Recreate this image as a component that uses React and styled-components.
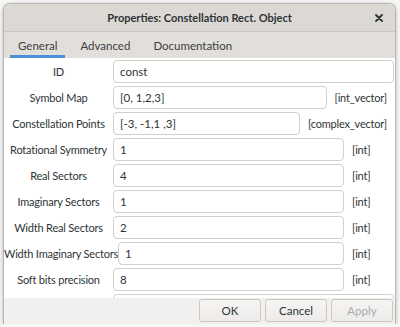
import React from 'react'
import styled, { createGlobalStyle } from 'styled-components'

const GlobalStyle = createGlobalStyle`
  html, body {
    margin: 0;
    padding: 0;
    background: #f7f7f8;
  }
  body {
    font-family: Lato, "Noto Sans", sans-serif;
    font-size: 11px;
    color: #2e3436;
  }
`

const rows = [
  { label: 'ID', value: 'const' },
  { label: 'Symbol Map', value: '[0, 1,2,3]', type: '[int_vector]' },
  { label: 'Constellation Points', value: '[-3, -1,1 ,3]', type: '[complex_vector]' },
  { label: 'Rotational Symmetry', value: '1', type: '[int]' },
  { label: 'Real Sectors', value: '4', type: '[int]' },
  { label: 'Imaginary Sectors', value: '1', type: '[int]' },
  { label: 'Width Real Sectors', value: '2', type: '[int]' },
  { label: 'Width Imaginary Sectors', value: '1', type: '[int]' },
  { label: 'Soft bits precision', value: '8', type: '[int]' },
  { label: '', value: '' },
]

const tabs = ['General', 'Advanced', 'Documentation']

export default function App() {
  return (
    <>
      <GlobalStyle />
      <Dialog>
        <TitleBar>
          <span />
          <Title>Properties: Constellation Rect. Object</Title>
          <Close>
            <svg width="8" height="8" viewBox="0 0 8 8">
              <path d="M1 1 L7 7 M7 1 L1 7" stroke="#2e3436" strokeWidth="1.8" strokeLinecap="round" />
            </svg>
          </Close>
        </TitleBar>
        <TabBar>
          {tabs.map((t, i) => (
            <Tab key={t} active={i === 0}>{t}</Tab>
          ))}
        </TabBar>
        <Content>
          {rows.map((r, i) => (
            <Row key={i}>
              <Label>{r.label}</Label>
              <Field>{r.value}</Field>
              {r.type && <TypeTag>{r.type}</TypeTag>}
            </Row>
          ))}
        </Content>
        <ButtonBar>
          <Button>OK</Button>
          <Button>Cancel</Button>
          <Button disabled>Apply</Button>
        </ButtonBar>
      </Dialog>
    </>
  )
}

const Dialog = styled.div`
  margin: 3px 4px 0 3px;
  width: 391px;
  height: 320px;
  border: 1px solid #b9b5b0;
  border-bottom: none;
  border-radius: 7px 7px 0 0;
  background: #ffffff;
  box-shadow: 0 1px 4px rgba(0, 0, 0, 0.25);
  display: flex;
  flex-direction: column;
  overflow: hidden;
`

const TitleBar = styled.div`
  height: 27px;
  flex: none;
  display: grid;
  grid-template-columns: 30px 1fr 30px;
  align-items: center;
  background: #dcd9d5;
  border-bottom: 1px solid #cbc7c2;
`

const Title = styled.div`
  text-align: center;
  font-weight: 700;
  font-size: 11px;
  color: #2e3436;
`

const Close = styled.div`
  display: flex;
  justify-content: center;
  align-items: center;
  padding-right: 2px;
`

const TabBar = styled.div`
  height: 26px;
  flex: none;
  display: flex;
  gap: 7px;
  padding-left: 6px;
  background: #e2dfdb;
`

const Tab = styled.div`
  padding: 0 8px;
  display: flex;
  align-items: center;
  font-size: 11.5px;
  color: #3a3d3f;
  box-shadow: ${p => (p.active ? 'inset 0 -3px 0 #4a90d9' : 'none')};
`

const Content = styled.div`
  flex: 1;
  min-height: 0;
  overflow: hidden;
  padding: 2px 1px 0 0;
  display: flex;
  flex-direction: column;
  gap: 3px;
`

const Row = styled.div`
  display: flex;
  align-items: center;
  height: 23px;
  flex: none;
`

const Label = styled.div`
  min-width: 109px;
  text-align: center;
  white-space: nowrap;
  font-size: 11px;
  letter-spacing: -0.2px;
  color: #2e3436;
`

const Field = styled.div`
  flex: 1;
  height: 23px;
  box-sizing: border-box;
  border: 1px solid #d3cfca;
  border-radius: 4px;
  padding: 0 6px;
  display: flex;
  align-items: center;
  font-size: 11.5px;
  color: #2e3436;
  background: #ffffff;
`

const TypeTag = styled.div`
  min-width: 50px;
  box-sizing: border-box;
  padding: 0 7px 0 8px;
  white-space: nowrap;
  font-size: 11px;
  letter-spacing: -0.2px;
  color: #2e3436;
`

const ButtonBar = styled.div`
  height: 25px;
  flex: none;
  display: flex;
  justify-content: flex-end;
  align-items: flex-start;
  gap: 4px;
  padding: 1px 2px 0 0;
  background: #f1f0ee;
`

const Button = styled.button`
  min-width: 62px;
  height: 23px;
  padding: 0 10px;
  border: 1px solid #cdc7c2;
  border-radius: 3px;
  background: linear-gradient(#f6f5f4, #edebe9);
  font-family: Lato, "Noto Sans", sans-serif;
  font-size: 11.5px;
  color: ${p => (p.disabled ? '#a9abab' : '#2e3436')};
`
